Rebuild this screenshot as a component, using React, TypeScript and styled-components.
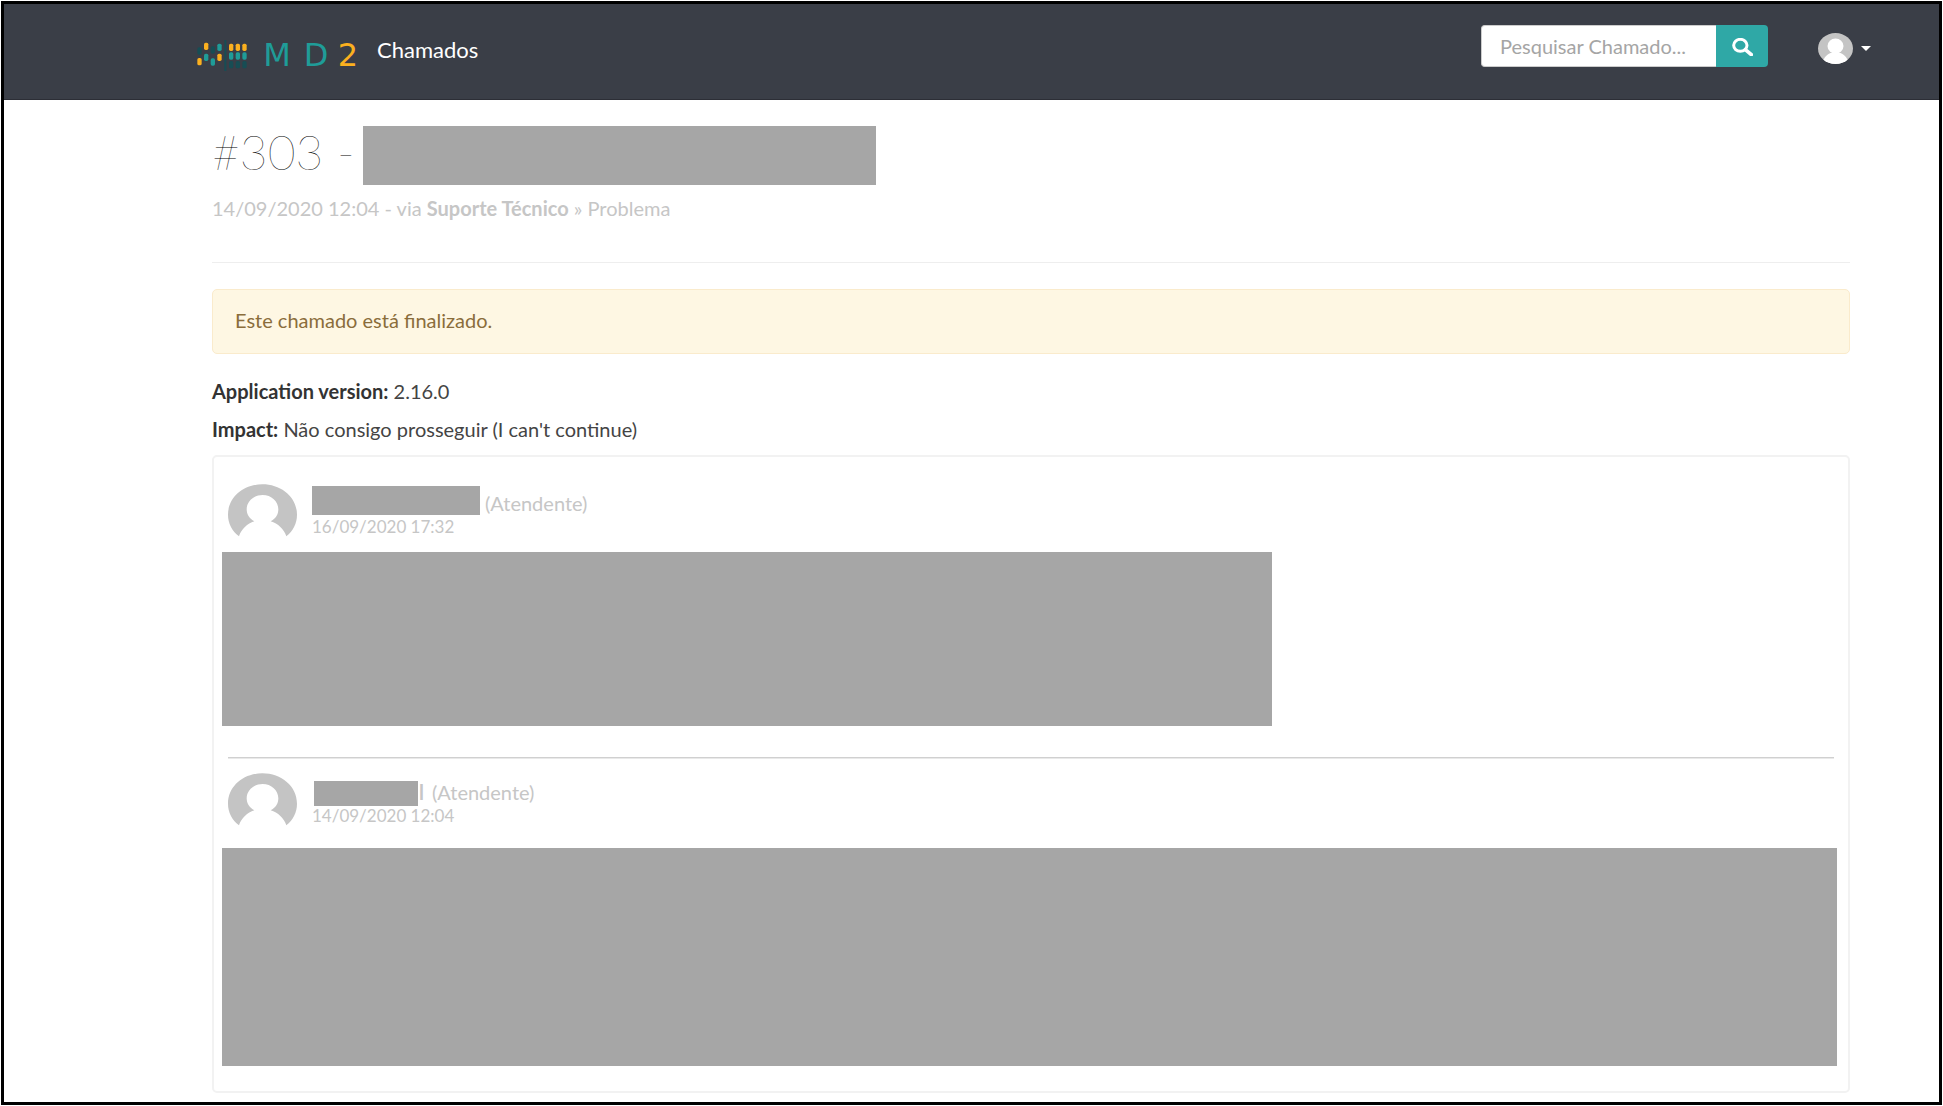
import React from "react";
import styled, { createGlobalStyle } from "styled-components";

const GlobalStyle = createGlobalStyle`
  *, *::before, *::after { box-sizing: border-box; }
  body {
    margin: 0;
    background: #fff;
    color: #444;
    font-family: Lato, "Liberation Sans", sans-serif;
    font-size: 20px;
    line-height: 28px;
  }
`;

const Frame = styled.div`
  min-height: calc(100vh - 2px);
  margin: 1px;
  border: 3px solid #000;
`;

const Header = styled.header`
  display: flex;
  align-items: flex-start;
  justify-content: space-between;
  height: 96px;
  padding: 21px 68px 0 193px;
  background: #3a3e47;
  border-bottom: 1px solid #2c2e36;
`;

const Brand = styled.a`
  display: flex;
  align-items: flex-start;
  gap: 16px;
  padding-top: 11px;
  color: #fff;
  text-decoration: none;
  font-size: 22px;
`;

const Logo = styled.span`
  display: flex;
  align-items: center;
  gap: 10px;
  padding-top: 3px;
`;

const Wordmark = styled.span`
  display: grid;
  grid-template-columns: 40px 38px 26px;
  justify-items: center;
  font-family: "DejaVu Sans", sans-serif;
  font-size: 32px;
  line-height: 32px;
`;

const Letter = styled.span<{ $color: string }>`
  color: ${(p) => p.$color};
`;

const Tools = styled.div`
  display: flex;
  align-items: center;
  gap: 50px;
`;

const Search = styled.form`
  display: flex;
  height: 42px;
`;

const SearchInput = styled.input`
  width: 235px;
  padding: 0 18px;
  border: 1px solid #ccc;
  border-right: 0;
  border-radius: 4px 0 0 4px;
  background: #fff;
  color: #444;
  font: inherit;
  outline: 0;
  &::placeholder { color: #a5a5a5; opacity: 1; }
`;

const SearchButton = styled.button`
  display: flex;
  align-items: center;
  justify-content: center;
  width: 52px;
  padding: 2px 0 0;
  border: 0;
  border-radius: 0 4px 4px 0;
  background: #2fa8a6;
  color: #fff;
`;

const UserMenu = styled.button`
  display: flex;
  align-items: center;
  gap: 8px;
  padding: 4px 0 0;
  border: 0;
  background: none;
`;

const Caret = styled.span`
  border: 5px solid transparent;
  border-top-color: #fff;
  border-bottom: 0;
`;

const Main = styled.main`
  padding: 26px 89px 8px 208px;
`;

const Title = styled.h1`
  display: flex;
  align-items: flex-start;
  gap: 8px;
  margin: 0;
  color: #000;
  font-size: 48px;
  font-weight: 100;
  line-height: 52px;
`;

const Redacted = styled.span<{ $width: string; $height: number; $align?: string }>`
  display: block;
  align-self: ${(p) => p.$align ?? "auto"};
  width: ${(p) => p.$width};
  height: ${(p) => p.$height}px;
  background: #a6a6a6;
`;

const Origin = styled.p`
  margin: 9px 0 0;
  padding-bottom: 40px;
  border-bottom: 1px solid #eee;
  color: #c6c6c6;
`;

const Notice = styled.div`
  margin: 26px 0 23px;
  padding: 16px 22px 19px;
  border: 1px solid #faebcc;
  border-radius: 5px;
  background: #fef7e3;
  color: #8a6d3b;
`;

const Field = styled.p`
  margin: 0 0 10px;
  b { color: #333; }
`;

const Thread = styled.section`
  margin-top: 12px;
  padding: 27px 11px 25px 8px;
  border: 2px solid #f2f2f2;
  border-radius: 5px;
`;

const Divider = styled.hr`
  height: 2px;
  margin: 31px 3px 14px 6px;
  border: 0;
  border-top: 1px solid #d0d0d0;
  border-bottom: 1px solid #e9e9e9;
`;

const ReplyHead = styled.header<{ $space: number }>`
  display: flex;
  gap: 15px;
  padding-left: 6px;
  margin-bottom: ${(p) => p.$space}px;
`;

const Byline = styled.div`
  color: #c6c6c6;
`;

const Author = styled.div`
  display: flex;
  align-items: flex-end;
  gap: 5px;
  height: 33px;
`;

const Name = styled.b`
  display: flex;
  align-items: flex-end;
  gap: 1px;
  height: 33px;
  padding: 0 3px 0 2px;
`;

const When = styled.time`
  display: block;
  font-size: 17px;
  line-height: 20px;
`;

const HeaderAvatar = () => (
  <svg width="35" height="31" viewBox="0 0 70 62" preserveAspectRatio="none" aria-hidden="true">
    <defs>
      <clipPath id="disc"><ellipse cx="35" cy="31" rx="35" ry="31" /></clipPath>
    </defs>
    <g clipPath="url(#disc)">
      <rect width="70" height="62" fill="#c4c4c4" />
      <ellipse cx="35" cy="26" rx="16" ry="15" fill="#fff" />
      <path d="M8 62C11 48 20 41 28 39H42C50 41 59 48 62 62Z" fill="#fff" />
    </g>
  </svg>
);

const Avatar = () => (
  <svg width="69" height="54" viewBox="0 0 207 162" aria-hidden="true">
    <path
      d="M33 157C12 141 0 118 0 92C0 40 46 1 103 1S207 40 207 92C207 118 195 141 175 157C168 135 150 119 128 112C143 105 151 91 151 76C151 52 130 33 104 33S56 52 56 76C56 91 65 105 79 112C58 119 40 135 33 157Z"
      fill="#c4c4c4"
    />
  </svg>
);

const DARK = "#174d54";
const TEAL = "#1f9c98";
const GOLD = "#fbb01f";

const dots: [number, number, string][] = [
  [0, 22, DARK], [0, 54, GOLD], [20, 8, GOLD], [20, 41, TEAL],
  [40, 19, DARK], [40, 55, TEAL], [60, 11, TEAL], [60, 41, GOLD],
  [95, 11, GOLD], [115, 11, GOLD], [135, 11, GOLD],
  [95, 37, TEAL], [115, 37, TEAL], [135, 37, TEAL],
  [95, 63, DARK], [115, 63, DARK], [135, 63, DARK],
];

const LogoMark = () => (
  <svg width="50" height="31" viewBox="0 0 150 93" aria-hidden="true">
    {dots.map(([x, y, fill]) => (
      <rect key={`${x}-${y}`} x={x + 1} y={y} width="13" height="22" rx="5" fill={fill} />
    ))}
    <rect x="82" y="0" width="6" height="93" fill={DARK} />
  </svg>
);

const SearchIcon = () => (
  <svg width="21" height="18" viewBox="0 0 63 54" preserveAspectRatio="none" fill="none" stroke="#fff" aria-hidden="true">
    <ellipse cx="25" cy="22" rx="20" ry="18" strokeWidth="9" />
    <path d="M40 35L58 50" strokeWidth="11" strokeLinecap="round" />
  </svg>
);

export default function App() {
  return (
    <Frame>
      <GlobalStyle />
      <Header>
        <Brand href="#">
          <Logo>
            <LogoMark />
            <Wordmark>
              <Letter $color={TEAL}>M</Letter>
              <Letter $color={TEAL}>D</Letter>
              <Letter $color={GOLD}>2</Letter>
            </Wordmark>
          </Logo>
          Chamados
        </Brand>
        <Tools>
          <Search>
            <SearchInput type="text" placeholder="Pesquisar Chamado..." aria-label="Pesquisar Chamado" />
            <SearchButton type="button" aria-label="Pesquisar"><SearchIcon /></SearchButton>
          </Search>
          <UserMenu type="button" aria-label="Menu do usuário">
            <HeaderAvatar />
            <Caret />
          </UserMenu>
        </Tools>
      </Header>
      <Main>
        <Title>
          #303 - <Redacted $width="513px" $height={59} />
        </Title>
        <Origin>
          14/09/2020 12:04 - via <b>Suporte Técnico</b> » Problema
        </Origin>
        <Notice>Este chamado está finalizado.</Notice>
        <Field><b>Application version:</b> 2.16.0</Field>
        <Field><b>Impact:</b> Não consigo prosseguir (I can't continue)</Field>
        <Thread>
          <article>
            <ReplyHead $space={14}>
              <Avatar />
              <Byline>
                <Author><Redacted $width="168px" $height={29} $align="center" />(Atendente)</Author>
                <When>16/09/2020 17:32</When>
              </Byline>
            </ReplyHead>
            <Redacted $width="65%" $height={174} />
          </article>
          <Divider />
          <article>
            <ReplyHead $space={21}>
              <Avatar />
              <Byline>
                <Author><Name><Redacted $width="104px" $height={25} />l</Name>(Atendente)</Author>
                <When>14/09/2020 12:04</When>
              </Byline>
            </ReplyHead>
            <Redacted $width="100%" $height={218} />
          </article>
        </Thread>
      </Main>
    </Frame>
  );
}
